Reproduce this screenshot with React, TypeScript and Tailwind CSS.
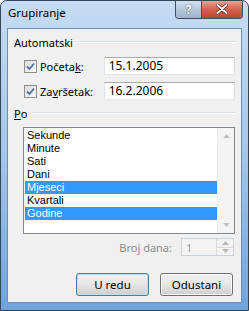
import React from "react";

const font = { fontFamily: '"Noto Sans", "Open Sans", sans-serif' };
const listFont = { fontFamily: '"Liberation Sans", Arial, sans-serif' };

const items = ["Sekunde", "Minute", "Sati", "Dani", "Mjeseci", "Kvartali", "Godine"];
const selected = ["Mjeseci", "Godine"];

const Check = () => (
  <div className="w-[13px] h-[13px] border border-[#8f8f8f] bg-gradient-to-br from-[#dcdcdc] to-[#fbfbfb] flex items-center justify-center">
    <svg width="9" height="9" viewBox="0 0 9 9">
      <path d="M1 4.5 L3.5 7 L8 1.5" fill="none" stroke="#4a6ea8" strokeWidth="1.8" />
    </svg>
  </div>
);

const GroupTitle = ({ children }: { children: React.ReactNode }) => (
  <div className="flex items-center h-[14px]">
    <span className="leading-none">{children}</span>
    <div className="flex-1 ml-[5px] h-[2px] border-t border-[#d5dfe5] border-b border-b-white" />
  </div>
);

const Field = ({ value }: { value: string }) => (
  <div className="w-[132px] h-[18px] border border-[#abadb3] border-b-[#e3e9ef] border-l-[#e2e3ea] border-r-[#dbdfe6] bg-white flex items-center pl-[4px] text-[12px] leading-none">
    {value}
  </div>
);

const Arrow = ({ up, color }: { up?: boolean; color: string }) => (
  <svg width="7" height="4" viewBox="0 0 7 4">
    <path d={up ? "M0 4 L3.5 0 L7 4 Z" : "M0 0 L3.5 4 L7 0 Z"} fill={color} />
  </svg>
);

const Button = ({ label, main }: { label: string; main?: boolean }) => (
  <button
    className={`w-[73px] h-[23px] rounded-[3px] border text-[11.5px] leading-none bg-gradient-to-b from-[#f2f2f2] via-[#e6e6e6] to-[#cfcfcf] ${
      main ? "border-[#3c7fb1] shadow-[inset_0_0_0_1px_#b9e2f5]" : "border-[#707070] shadow-[inset_0_0_0_1px_#fcfcfc]"
    }`}
  >
    {label}
  </button>
);

export default function App() {
  return (
    <div
      className="w-[249px] h-[311px] rounded-t-[7px] border border-[#344558] bg-gradient-to-b from-[#c6dcf2] via-[#a4c6ea] to-[#6ea4dc] flex flex-col text-[11px] text-black overflow-hidden"
      style={font}
    >
      <div className="h-[27px] flex items-start">
        <span className="pl-[7px] pt-[6px] leading-none text-[11.5px]">Grupiranje</span>
        <div className="ml-auto mr-[5px] flex h-[19px] -mt-px border border-[#3d4e63] border-t-0 rounded-b-[4px] overflow-hidden">
          <div className="w-[26px] bg-gradient-to-b from-[#d8e4ef] via-[#b7cade] to-[#9eb4cc] flex items-center justify-center border-r border-[#3d4e63]">
            <span className="text-[13px] font-bold text-white leading-none [text-shadow:0_0_1px_#3a4a60,0_0_1px_#3a4a60]">?</span>
          </div>
          <div className="w-[40px] bg-gradient-to-b from-[#e9a99c] via-[#d3654f] to-[#c3422b] flex items-center justify-center">
            <svg width="12" height="10" viewBox="0 0 12 10">
              <path d="M1.5 1 L10.5 9 M10.5 1 L1.5 9" stroke="#4a2620" strokeWidth="3.4" strokeLinecap="round" />
              <path d="M1.5 1 L10.5 9 M10.5 1 L1.5 9" stroke="#ffffff" strokeWidth="2" strokeLinecap="round" />
            </svg>
          </div>
        </div>
      </div>
      <div className="mx-[6px] flex-1 mb-[7px] bg-[#f0f0f0] border border-[#6b8fb5] flex flex-col px-[6px] pt-[6px]">
        <GroupTitle>Automatski</GroupTitle>
        <div className="flex flex-col gap-[7px] mt-[8px] pl-[10px]">
          <div className="flex items-center">
            <Check />
            <span className="ml-[3px] w-[64px] leading-none">
              Početa<span className="underline">k</span>:
            </span>
            <Field value="15.1.2005" />
          </div>
          <div className="flex items-center">
            <Check />
            <span className="ml-[3px] w-[64px] leading-none">
              Za<span className="underline">v</span>ršetak:
            </span>
            <Field value="16.2.2006" />
          </div>
        </div>
        <div className="mt-[6px]">
          <GroupTitle>
            <span className="underline">P</span>o
          </GroupTitle>
        </div>
        <div className="mt-[7px] ml-[9px] w-[212px] h-[107px] border border-[#828790] bg-white flex">
          <div className="flex-1 flex flex-col pt-[1px] pl-[1px]" style={listFont}>
            {items.map((it) => (
              <div
                key={it}
                className={`h-[13px] flex items-center pl-[2px] leading-[13px] ${
                  selected.includes(it) ? "bg-[#3399ff] text-white" : ""
                }`}
              >
                {it}
              </div>
            ))}
          </div>
          <div className="w-[17px] bg-[#f4f4f4] border-l border-[#ececec] flex flex-col items-center justify-between py-[6px]">
            <Arrow up color="#c0c0c0" />
            <Arrow color="#c0c0c0" />
          </div>
        </div>
        <div className="flex items-center justify-end mt-[4px] mr-[1px]">
          <span className="text-[#8a8a8a] mr-[9px] leading-none">Broj dana:</span>
          <div className="w-[53px] h-[18px] border border-[#c9d0d6] bg-[#f4f4f4] flex">
            <div className="flex-1 flex items-center pl-[4px] text-[#9a9a9a] leading-none">1</div>
            <div className="w-[17px] flex flex-col border-l border-[#dadada]">
              <div className="flex-1 flex items-center justify-center border-b border-[#dadada]">
                <Arrow up color="#b5b5b5" />
              </div>
              <div className="flex-1 flex items-center justify-center">
                <Arrow color="#b5b5b5" />
              </div>
            </div>
          </div>
        </div>
        <div className="flex justify-end gap-[11px] mt-[17px] mr-[2px]">
          <Button label="U redu" main />
          <Button label="Odustani" />
        </div>
      </div>
    </div>
  );
}
